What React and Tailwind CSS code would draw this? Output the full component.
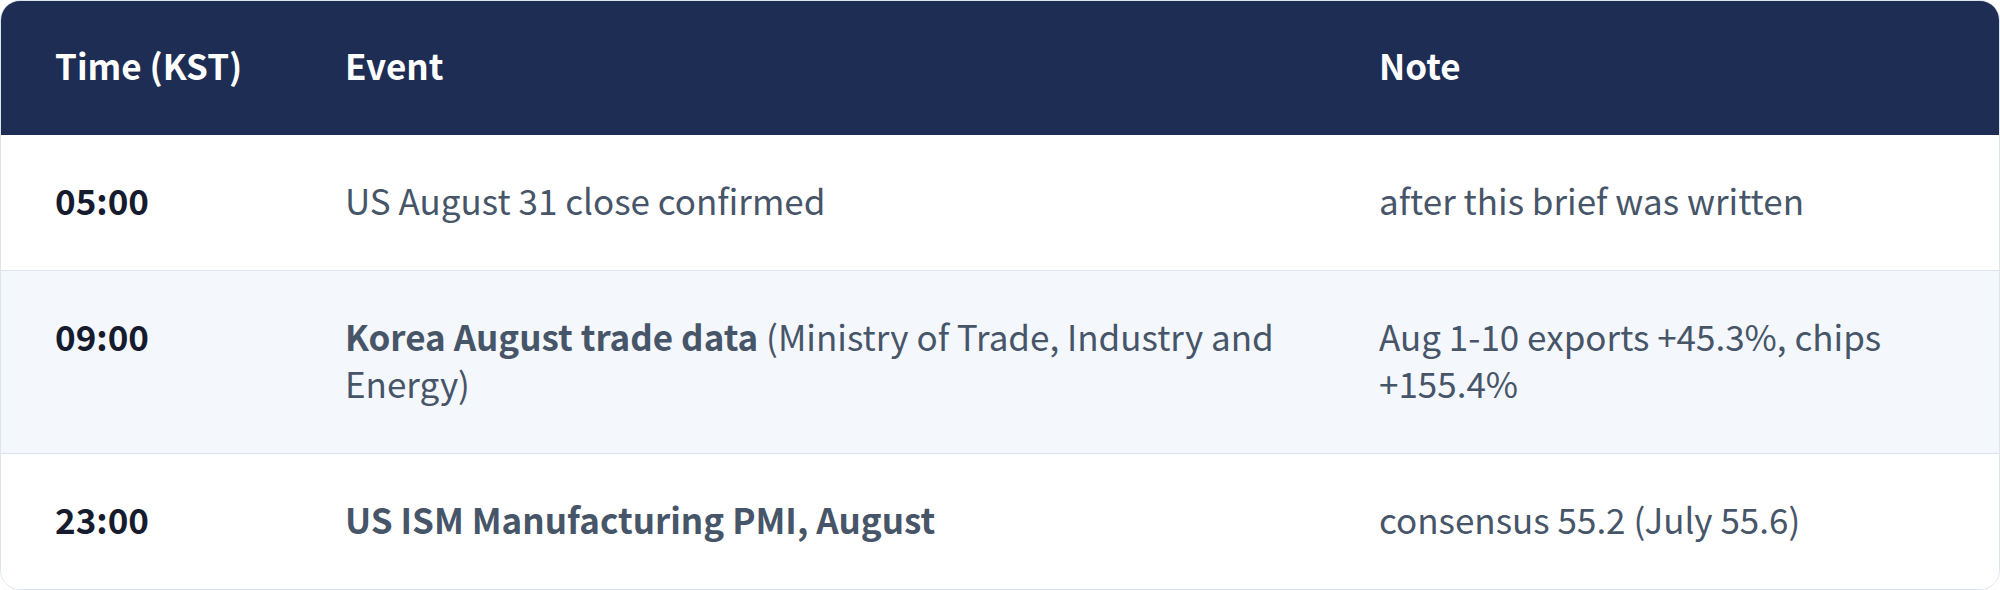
import React from 'react';

const rows = [
  { time: '05:00', event: <>US August 31 close confirmed</>, note: 'after this brief was written' },
  {
    time: '09:00',
    event: (
      <>
        <span className="font-bold">Korea August trade data</span> (Ministry of Trade, Industry and Energy)
      </>
    ),
    note: 'Aug 1-10 exports +45.3%, chips +155.4%',
  },
  {
    time: '23:00',
    event: <span className="font-bold">US ISM Manufacturing PMI, August</span>,
    note: 'consensus 55.2 (July 55.6)',
  },
];

export default function App() {
  return (
    <div
      className="w-full bg-white"
      style={{ fontFamily: '"Noto Sans CJK KR", "Noto Sans", sans-serif' }}
    >
      <div className="overflow-hidden rounded-[20px] border border-[#dde3ef]">
        <table className="w-full table-fixed border-collapse text-[35px] leading-[47px]">
          <colgroup>
            <col className="w-[290px]" />
            <col className="w-[1034px]" />
            <col />
          </colgroup>
          <thead>
            <tr className="bg-[#1e2d54] text-white">
              <th className="pl-[54px] pr-[40px] pt-[40px] pb-[47px] text-left font-bold">Time (KST)</th>
              <th className="pl-[54px] pr-[40px] pt-[40px] pb-[47px] text-left font-bold">Event</th>
              <th className="pl-[54px] pr-[54px] pt-[40px] pb-[47px] text-left font-bold">Note</th>
            </tr>
          </thead>
          <tbody>
            {rows.map((r, i) => (
              <tr
                key={r.time}
                className={`align-top ${i > 0 ? 'border-t border-[#dde3ef]' : ''} ${i === 1 ? 'bg-[#f4f7fc]' : 'bg-white'}`}
              >
                <td className="pl-[54px] pr-[40px] pt-[41px] pb-[47px] font-bold text-[#161c2d]">{r.time}</td>
                <td className="pl-[54px] pr-[40px] pt-[41px] pb-[47px] text-[#475569]">{r.event}</td>
                <td className="pl-[54px] pr-[54px] pt-[41px] pb-[47px] text-[#475569]">{r.note}</td>
              </tr>
            ))}
          </tbody>
        </table>
      </div>
    </div>
  );
}
